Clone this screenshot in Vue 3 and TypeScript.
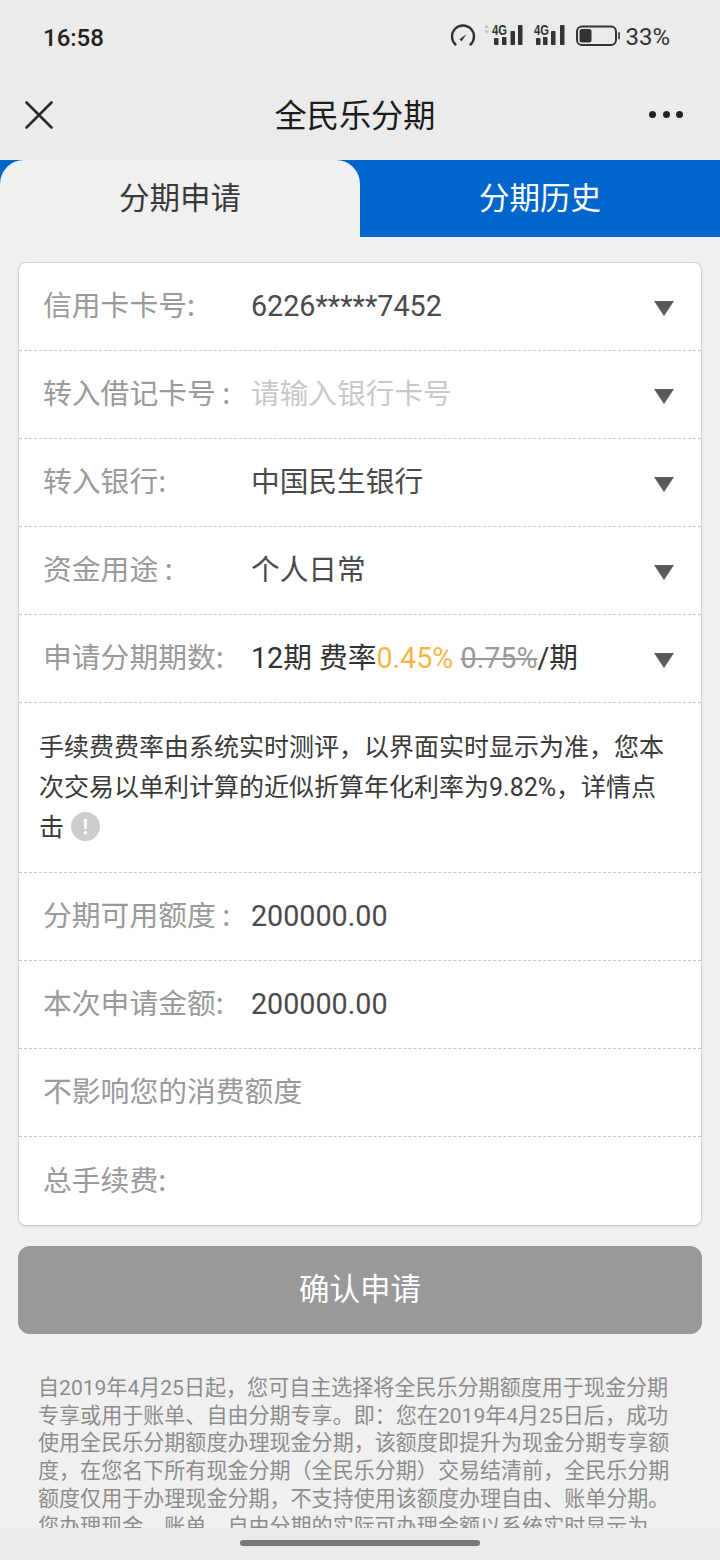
<script setup lang="ts">
interface Row {
  label: string;
  value?: string;
  placeholder?: boolean;
  num?: boolean;
}

const topRows: Row[] = [
  { label: "信用卡卡号:", value: "6226*****7452", num: true },
  { label: "转入借记卡号 :", value: "请输入银行卡号", placeholder: true },
  { label: "转入银行:", value: "中国民生银行" },
  { label: "资金用途 :", value: "个人日常" },
];

const bottomRows: Row[] = [
  { label: "分期可用额度 :", value: "200000.00", num: true },
  { label: "本次申请金额:", value: "200000.00", num: true },
  { label: "不影响您的消费额度" },
  { label: "总手续费:" },
];
</script>

<template>
  <div class="page">
    <header class="top">
      <div class="status">
        <span class="time">16:58</span>
        <div class="status__icons">
          <svg width="26" height="24" viewBox="0 0 26 24" class="gauge">
            <path d="M5.500 20.500 A11 11 0 1 1 20.500 20.500" fill="none" stroke="#333" stroke-width="2.400" stroke-linecap="round" />
            <path d="M16.500 10 L9.500 15.200 L11.500 17.500 Z" fill="#333" />
          </svg>
          <svg width="40" height="24" viewBox="0 0 40 24" class="signal signal--first">
            <path d="M1 4 L3.500 0.500 L6 4 Z M1 6.500 L3.500 10 L6 6.500 Z" fill="#c4c4c4" />
            <text x="9" y="11" textLength="15" lengthAdjust="spacingAndGlyphs" class="signal__net">4G</text>
            <rect x="11" y="14" width="4.500" height="7" rx="0.800" fill="#333" />
            <rect x="19" y="13" width="4.500" height="8" rx="0.800" fill="#333" />
            <rect x="27.500" y="7" width="4.500" height="14" rx="0.800" fill="#333" />
            <rect x="35" y="1" width="4.500" height="20" rx="0.800" fill="#333" />
          </svg>
          <svg width="32" height="24" viewBox="0 0 32 24" class="signal">
            <text x="1" y="11" textLength="15" lengthAdjust="spacingAndGlyphs" class="signal__net">4G</text>
            <rect x="3" y="14" width="4.500" height="7" rx="0.800" fill="#333" />
            <rect x="10" y="13" width="4.500" height="8" rx="0.800" fill="#333" />
            <rect x="18" y="7" width="4.500" height="14" rx="0.800" fill="#333" />
            <rect x="27" y="1" width="4.500" height="20" rx="0.800" fill="#333" />
          </svg>
          <svg width="44" height="24" viewBox="0 0 44 24" class="battery">
            <rect x="1" y="2.500" width="39" height="18.500" rx="5" fill="none" stroke="#333" stroke-width="2" />
            <rect x="3.500" y="5" width="12" height="13.500" rx="2.500" fill="#333" />
            <rect x="42" y="8" width="2" height="7.500" rx="1" fill="#555" />
          </svg>
          <span class="percent">33%</span>
        </div>
      </div>
      <div class="nav">
        <svg width="30" height="30" viewBox="0 0 30 30" class="nav__close">
          <path d="M2.500 2.500 L27.500 27.500 M27.500 2.500 L2.500 27.500" stroke="#2b2b2b" stroke-width="2.600" stroke-linecap="round" />
        </svg>
        <h1 class="nav__title">全民乐分期</h1>
        <div class="nav__more"><i></i><i></i><i></i></div>
      </div>
    </header>

    <nav class="tabs">
      <div class="tab tab--active">分期申请</div>
      <div class="tab">分期历史</div>
    </nav>

    <main class="content">
      <section class="card">
        <div v-for="row in topRows" :key="row.label" class="row">
          <span class="row__label">{{ row.label }}</span>
          <span
            class="row__value"
            :class="{ 'row__value--hint': row.placeholder, 'row__value--num': row.num }"
          >{{ row.value }}</span>
          <i class="row__arrow"></i>
        </div>
        <div class="row">
          <span class="row__label">申请分期期数:</span>
          <span class="row__value row__value--dark">12期 费率<em class="rate">0.45%</em> <s class="old">0.75%</s>/期</span>
          <i class="row__arrow"></i>
        </div>
        <div class="note">
          手续费费率由系统实时测评，以界面实时显示为准，您本次交易以单利计算的近似折算年化利率为9.82%，详情点击
          <svg width="29" height="29" viewBox="0 0 29 29" class="note__icon">
            <circle cx="14.500" cy="14.500" r="14.500" fill="#cdcdcd" />
            <path d="M12.800 7 H16.200 L15.600 17 H13.400 Z" fill="#fff" />
            <circle cx="14.500" cy="20.800" r="1.900" fill="#fff" />
          </svg>
        </div>
        <div v-for="row in bottomRows" :key="row.label" class="row">
          <span class="row__label">{{ row.label }}</span>
          <span v-if="row.value" class="row__value" :class="{ 'row__value--num': row.num }">{{ row.value }}</span>
        </div>
      </section>

      <button type="button" class="submit">确认申请</button>

      <p class="terms">
        自2019年4月25日起，您可自主选择将全民乐分期额度用于现金分期专享或用于账单、自由分期专享。即：您在2019年4月25日后，成功使用全民乐分期额度办理现金分期，该额度即提升为现金分期专享额度，在您名下所有现金分期（全民乐分期）交易结清前，全民乐分期额度仅用于办理现金分期，不支持使用该额度办理自由、账单分期。您办理现金、账单、自由分期的实际可办理金额以系统实时显示为准。
      </p>
    </main>

    <footer class="gesture"><span class="gesture__bar"></span></footer>
  </div>
</template>

<style>
html,
body {
  margin: 0;
  padding: 0;
  background: #f0f0f0;
}
</style>

<style scoped>
.page {
  width: 720px;
  height: 1560px;
  display: flex;
  flex-direction: column;
  overflow: hidden;
  background: #f0f0f0;
  font-family: Roboto, "Noto Sans CJK SC", sans-serif;
}

.top {
  height: 160px;
  flex: none;
  background: #ebebeb;
}

.status {
  height: 72px;
  box-sizing: border-box;
  display: flex;
  align-items: center;
  justify-content: space-between;
  padding: 2px 50px 0 43px;
  color: #222;
}

.time {
  margin-top: 2px;
  font-size: 24px;
  font-weight: 500;
}

.status__icons {
  display: flex;
  align-items: center;
}

.status__icons svg {
  margin-top: -2px;
  overflow: visible;
}

.gauge {
  margin-right: 7px;
}

.signal {
  margin-right: 11px;
}

.signal--first {
  margin-right: 10px;
}

.signal__net {
  font-family: "Liberation Sans", sans-serif;
  font-size: 14.500px;
  font-weight: 700;
  fill: #333;
}

.battery {
  margin-right: 5px;
}

.percent {
  font-size: 24px;
  color: #333;
}

.nav {
  height: 88px;
  display: flex;
  align-items: center;
  justify-content: space-between;
  padding: 0 24px;
}

.nav__close {
  margin-top: -2px;
}

.nav__title {
  margin: -6px 0 0 7px;
  font-size: 32.200px;
  font-weight: 400;
  color: #1c1c1c;
}

.nav__more {
  display: flex;
  gap: 6.500px;
  margin-right: 13px;
  margin-top: -4px;
}

.nav__more i {
  width: 7px;
  height: 7px;
  border-radius: 50%;
  background: #222;
}

.tabs {
  height: 77px;
  flex: none;
  display: flex;
  background: #0066cc;
}

.tab {
  flex: 1;
  display: flex;
  align-items: center;
  justify-content: center;
  padding-bottom: 6px;
  box-sizing: border-box;
  font-size: 30.500px;
  color: #fff;
}

.tab--active {
  background: #f0f0f0;
  color: #3a3a3a;
  border-radius: 24px 24px 0 0;
}

.content {
  flex: 1;
  min-height: 0;
  overflow: hidden;
  padding: 25px 18px 0;
}

.card {
  background: #fff;
  border: 1px solid #d6d6d6;
  border-bottom-color: #c8c8c8;
  border-radius: 8px;
  box-shadow: 0 1px 2px rgba(0, 0, 0, 0.08);
}

.row {
  height: 88px;
  box-sizing: border-box;
  display: flex;
  align-items: center;
  padding: 0 27px 6px 24px;
  border-bottom: 1px dashed #c9c9c9;
  font-size: 28.800px;
}

.row:last-child {
  border-bottom: none;
}

.row__label {
  width: 208px;
  flex: none;
  color: #9a9a9a;
  white-space: nowrap;
  font-family: "Noto Sans CJK SC", sans-serif;
}

.row__value {
  flex: 1;
  color: #4a4a4a;
  white-space: nowrap;
  font-size: 28.700px;
}

.row__value--dark {
  color: #333;
}

.row__value--hint {
  color: #c9c9c9;
}

.row__value--num {
  margin-top: 4px;
}

.rate {
  font-style: normal;
  color: #f5b74a;
}

.old {
  color: #999;
}

.row__arrow {
  width: 0;
  height: 0;
  border-left: 10px solid transparent;
  border-right: 10px solid transparent;
  border-top: 15px solid #595959;
  margin-top: 10px;
}

.note {
  height: 170px;
  box-sizing: border-box;
  padding: 25px 27px 0 20px;
  border-bottom: 1px dashed #c9c9c9;
  font-size: 25px;
  line-height: 40px;
  color: #3a3a3a;
}

.note__icon {
  margin-left: 1px;
  vertical-align: -5px;
}

.submit {
  display: block;
  width: 100%;
  height: 88px;
  margin-top: 20px;
  padding: 0 0 6px;
  border: none;
  border-radius: 12px;
  background: #999;
  color: #fff;
  font-family: inherit;
  font-size: 30.500px;
}

.terms {
  margin: 40px 0 0;
  padding: 0 20px;
  font-size: 21.050px;
  line-height: 27.700px;
  color: #8c8c8c;
}

.gesture {
  height: 32px;
  flex: none;
  background: #ebebeb;
  display: flex;
  justify-content: center;
  padding-top: 12px;
  box-sizing: border-box;
}

.gesture__bar {
  width: 240px;
  height: 6px;
  border-radius: 3px;
  background: #7a7a7a;
}
</style>
